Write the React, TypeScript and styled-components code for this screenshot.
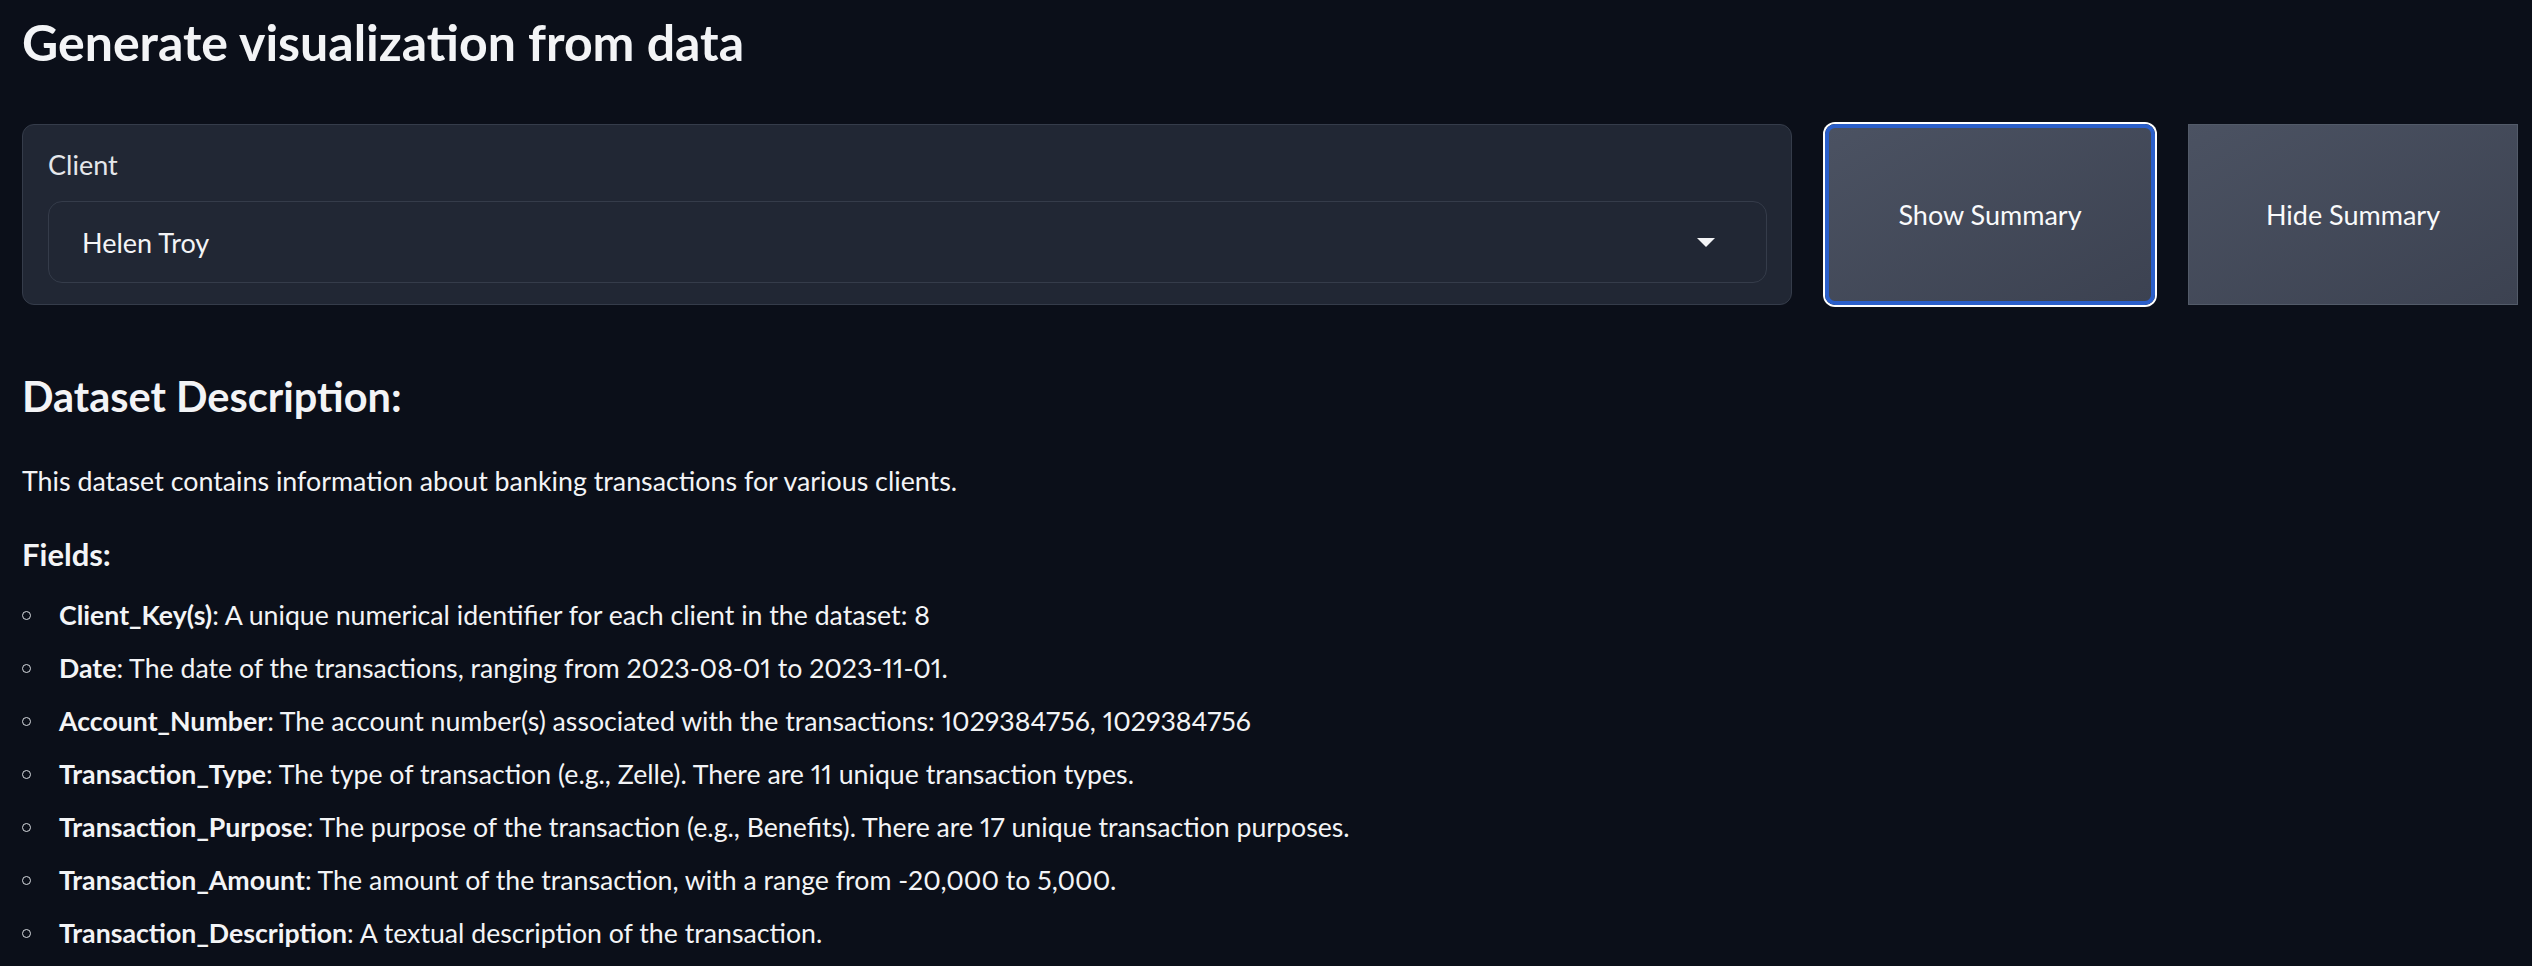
import React from "react";
import styled, { createGlobalStyle } from "styled-components";

const Global = createGlobalStyle`
  html, body {
    margin: 0;
    padding: 0;
    background: #0b0f19;
  }
  body {
    font-family: Lato, "Noto Sans", sans-serif;
    color: #f3f4f6;
    overflow: hidden;
  }
`;

const Page = styled.div`
  width: 2532px;
  height: 966px;
  box-sizing: border-box;
  padding: 0 14px 0 22px;
  background: #0b0f19;
`;

const Title = styled.h1`
  margin: 12px 0 0;
  font-size: 50px;
  line-height: 1.2;
  font-weight: 700;
  color: #f3f4f6;
`;

const Row = styled.div`
  display: flex;
  gap: 33px;
  height: 181px;
  margin-top: 52px;
`;

const Panel = styled.div`
  flex: 1;
  box-sizing: border-box;
  border: 1.5px solid #353c4a;
  border-radius: 12px;
  background: #212734;
  padding: 24px 24px 0 25px;
  display: flex;
  flex-direction: column;
`;

const Label = styled.div`
  font-size: 27px;
  line-height: 1.2;
  color: #e5e7eb;
`;

const Select = styled.div`
  margin-top: 20px;
  height: 82px;
  box-sizing: border-box;
  border: 1.5px solid #353c4a;
  border-radius: 14px;
  background: #212734;
  display: flex;
  align-items: center;
  justify-content: space-between;
  padding: 0 51px 0 33px;
  font-size: 27px;
  color: #f3f4f6;
`;

const Caret = styled.svg`
  width: 18px;
  height: 9px;
  display: block;
`;

const ActionButton = styled.button<{ $focused?: boolean }>`
  flex: 0 0 330px;
  box-sizing: border-box;
  font-family: Lato, "Noto Sans", sans-serif;
  font-size: 27px;
  color: #f9fafb;
  cursor: pointer;
  background: linear-gradient(to bottom right, #4b5262, #3c4251);
  border: ${(p) => (p.$focused ? "4px solid #2b5fca" : "1.5px solid #535b69")};
  border-radius: ${(p) => (p.$focused ? "10px" : "0")};
  box-shadow: ${(p) => (p.$focused ? "0 0 0 2px #ffffff" : "none")};
  padding: 0;
`;

const Heading2 = styled.h2`
  margin: 67px 0 0;
  font-size: 41.5px;
  line-height: 1.2;
  font-weight: 700;
  color: #f3f4f6;
`;

const Paragraph = styled.p`
  margin: 39px 0 0;
  font-size: 26.8px;
  line-height: 40px;
  color: #f3f4f6;
`;

const Heading3 = styled.h3`
  margin: 35px 0 0;
  font-size: 31px;
  line-height: 1.2;
  font-weight: 700;
  color: #f3f4f6;
`;

const List = styled.ul`
  list-style: none;
  margin: 22px 0 0;
  padding: 0;
  display: flex;
  flex-direction: column;
  gap: 13px;
`;

const Item = styled.li`
  display: flex;
  align-items: center;
  font-size: 26.7px;
  line-height: 40px;
  color: #f3f4f6;
  font-variant-numeric: proportional-nums;
`;

const Bullet = styled.span`
  flex: 0 0 auto;
  width: 7px;
  height: 7px;
  border: 1.3px solid #d8dbe0;
  border-radius: 50%;
  margin: 0 28px 0 0;
  transform: translateY(1px);
`;

const Strong = styled.strong`
  font-weight: 700;
`;

const fields: [string, string][] = [
  ["Client_Key(s)", ": A unique numerical identifier for each client in the dataset: 8"],
  ["Date", ": The date of the transactions, ranging from 2023-08-01 to 2023-11-01."],
  ["Account_Number", ": The account number(s) associated with the transactions: 1029384756, 1029384756"],
  ["Transaction_Type", ": The type of transaction (e.g., Zelle). There are 11 unique transaction types."],
  ["Transaction_Purpose", ": The purpose of the transaction (e.g., Benefits). There are 17 unique transaction purposes."],
  ["Transaction_Amount", ": The amount of the transaction, with a range from -20,000 to 5,000."],
  ["Transaction_Description", ": A textual description of the transaction."],
];

export default function App() {
  return (
    <Page>
      <Global />
      <Title>Generate visualization from data</Title>
      <Row>
        <Panel>
          <Label>Client</Label>
          <Select>
            <span>Helen Troy</span>
            <Caret viewBox="0 0 18 9">
              <polygon points="0,0 18,0 9,9" fill="#f3f4f6" />
            </Caret>
          </Select>
        </Panel>
        <ActionButton $focused>Show Summary</ActionButton>
        <ActionButton>Hide Summary</ActionButton>
      </Row>
      <Heading2>Dataset Description:</Heading2>
      <Paragraph>This dataset contains information about banking transactions for various clients.</Paragraph>
      <Heading3>Fields:</Heading3>
      <List>
        {fields.map(([k, v]) => (
          <Item key={k}>
            <Bullet />
            <span>
              <Strong>{k}</Strong>
              {v}
            </span>
          </Item>
        ))}
      </List>
    </Page>
  );
}
